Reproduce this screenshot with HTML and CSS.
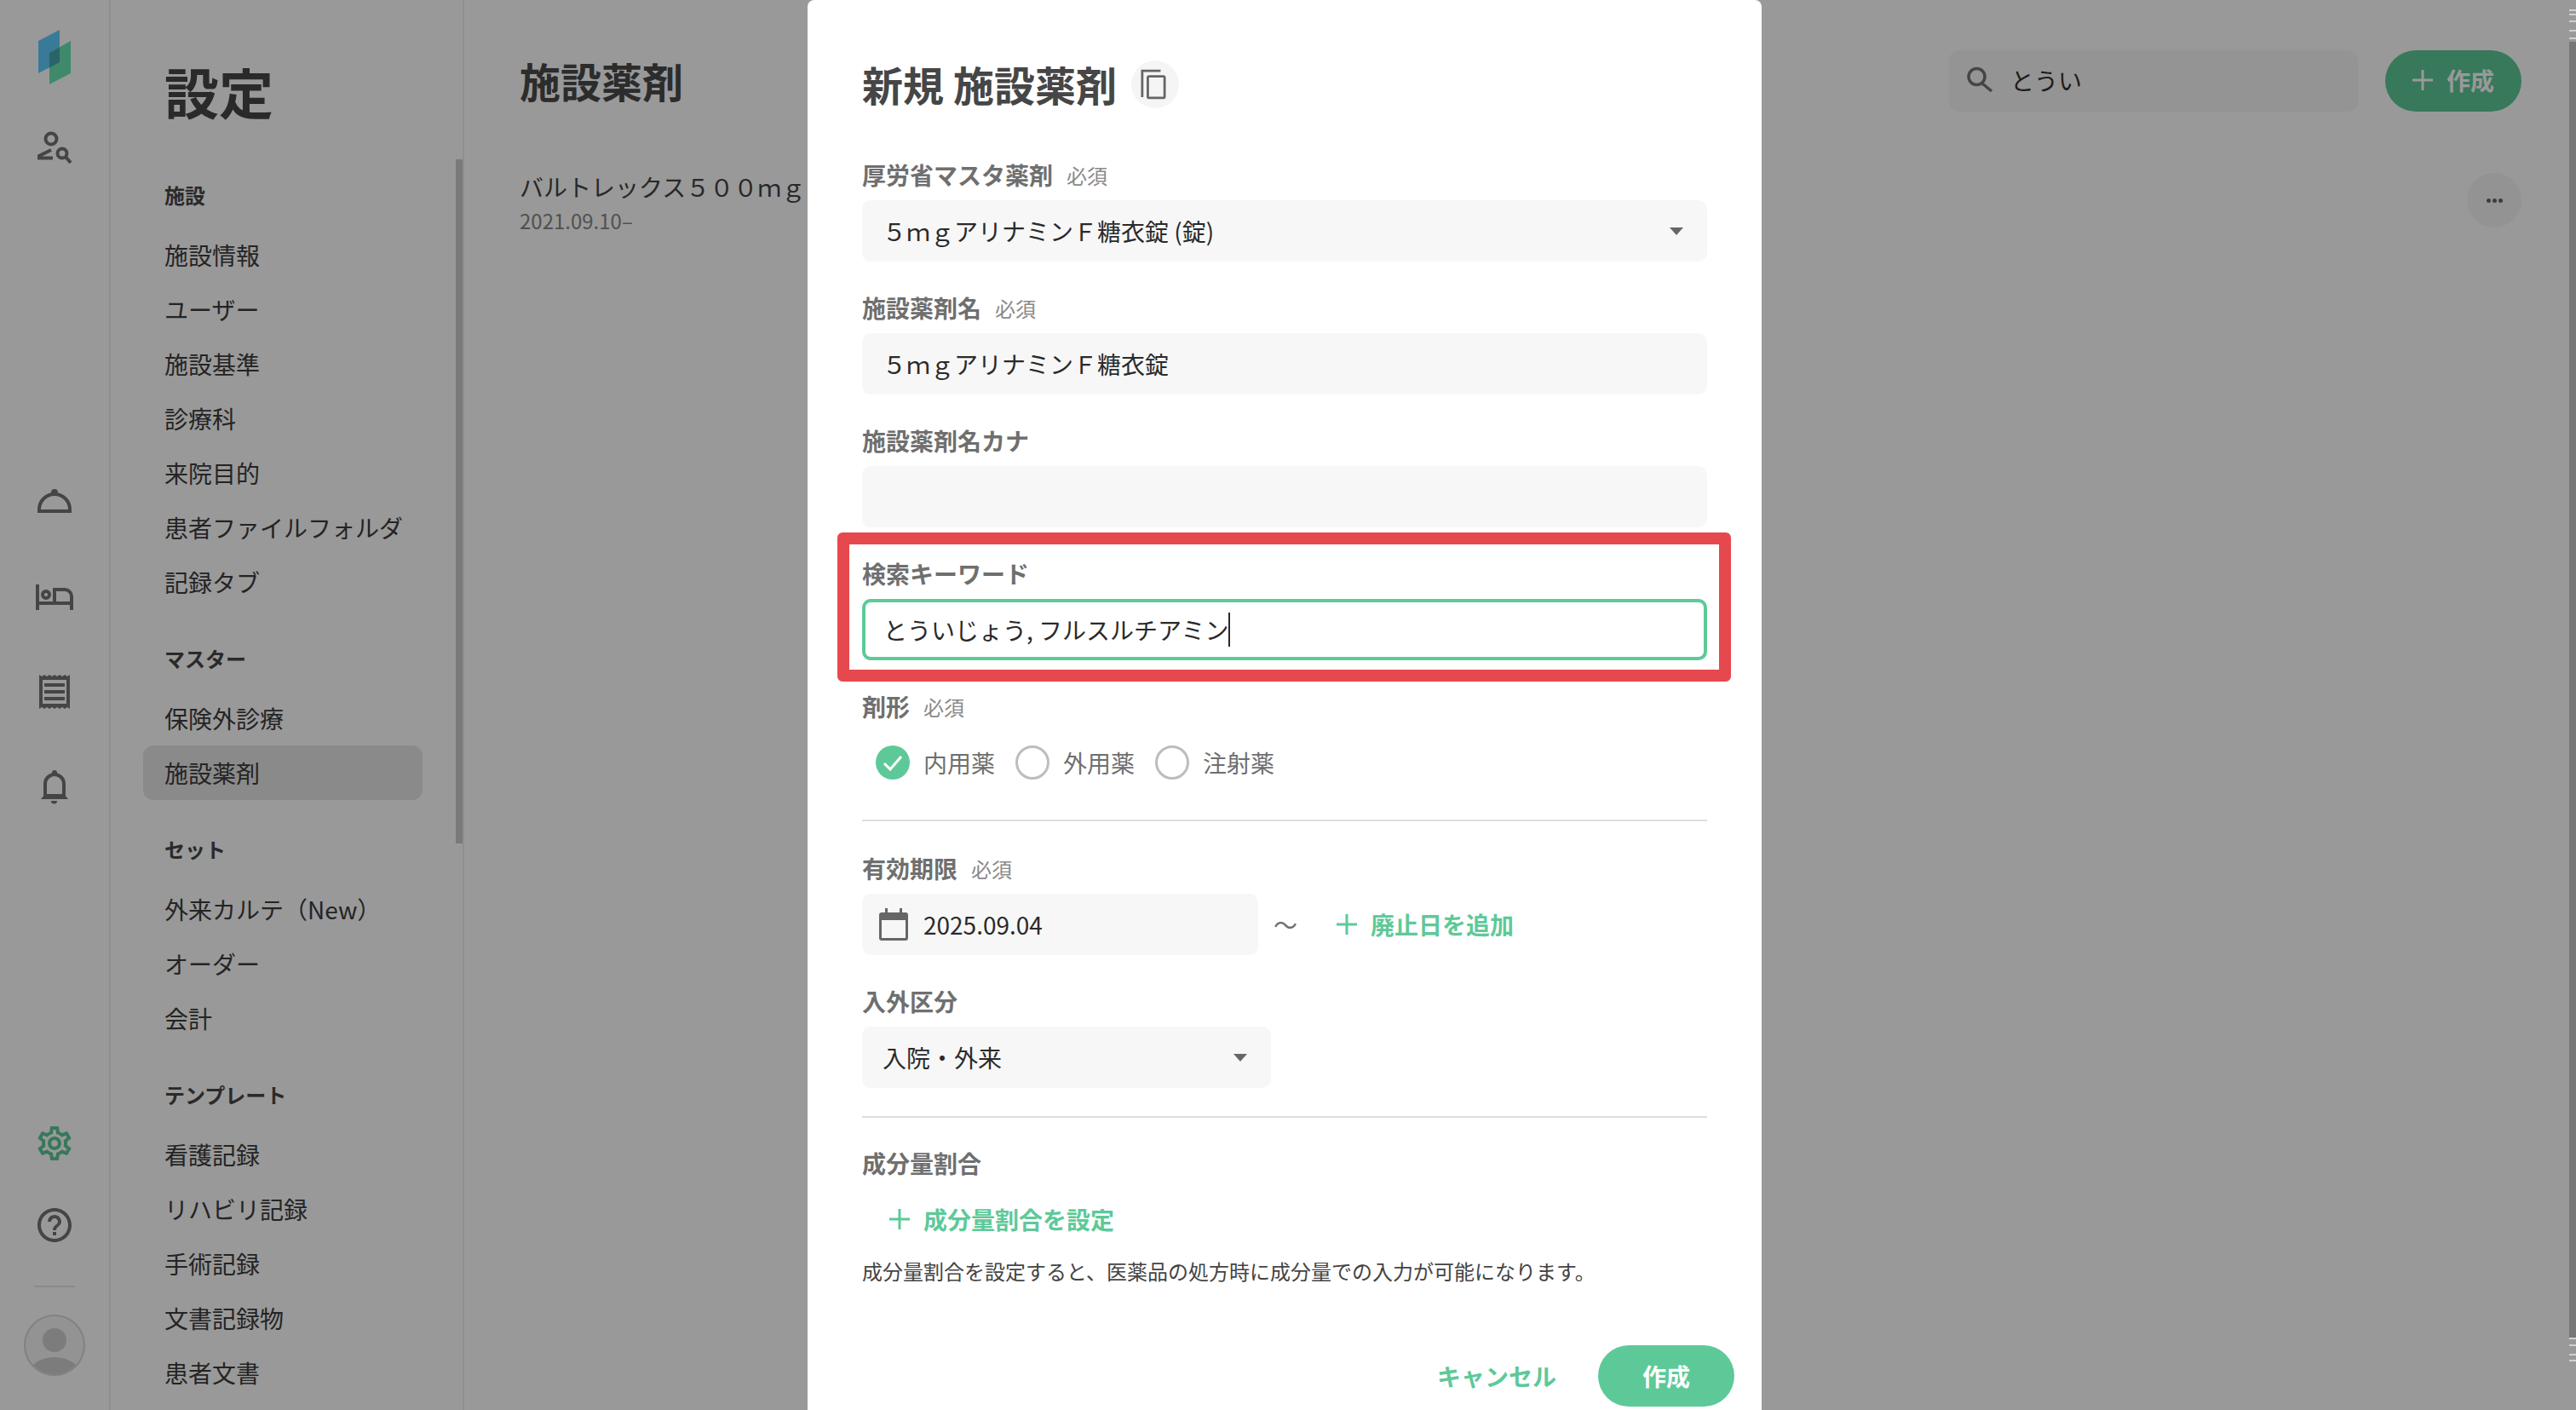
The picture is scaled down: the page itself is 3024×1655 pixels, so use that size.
FILE: index.html
```html
<!DOCTYPE html>
<html lang="ja">
<head>
	<meta charset="UTF-8">
	<meta name="viewport" content="width=device-width, initial-scale=1.0">
	<title>施設薬剤</title>
	<link rel="stylesheet" href="styles.css">
</head>
<body>

	<div class="app">
		<!-- Icon rail -->
		<nav class="rail">
			<svg class="logo" width="40" height="66" viewBox="44 34 40 66">
				<polygon points="45,48 70,35 70,73 45,86" fill="#60ccff"/>
				<polygon points="58,62 83,48 83,86 58,99" fill="#69e6b1"/>
				<polygon points="58,62 70,55.5 70,73 58,79.5" fill="#46a7af"/>
			</svg>
			<svg class="rail-search" width="42" height="38" viewBox="43 154 42 38" fill="none" stroke="#737373" stroke-width="4">
				<circle cx="60" cy="163" r="6.5"/>
				<path d="M60 176 L46 183 V185.5 H62"/>
				<circle cx="73" cy="180" r="5.5"/>
				<path d="M77 184 L83 191"/>
			</svg>
			<div class="rail-mid">
				<svg width="48" height="48" viewBox="0 0 48 48" fill="#737373">
					<circle cx="24" cy="14" r="4"/>
					<path d="M6 34 a18 18 0 0 1 36 0" fill="none" stroke="#737373" stroke-width="4"/>
					<rect x="4" y="34" width="40" height="4"/>
				</svg>
				<svg width="48" height="48" viewBox="0 0 48 48" fill="none" stroke="#737373" stroke-width="4">
					<path d="M4 10 V40 M4 32 H44 M44 40 V24 a8 8 0 0 0 -8 -8 H24 V32"/>
					<circle cx="14" cy="22" r="4"/>
				</svg>
				<svg width="48" height="48" viewBox="0 0 48 48" fill="#737373">
					<path d="M6 4 l3 2 3-2 3 2 3-2 3 2 3-2 3 2 3-2 3 2 3-2 3 2 3-2 V44 l-3-2-3 2-3-2-3 2-3-2-3 2-3-2-3 2-3-2-3 2-3-2-3 2 Z M10 10 V38 H38 V10 Z" fill-rule="evenodd"/>
					<rect x="12" y="14" width="24" height="4"/>
					<rect x="12" y="22" width="24" height="4"/>
					<rect x="12" y="30" width="24" height="4"/>
				</svg>
				<svg width="48" height="48" viewBox="0 0 48 48" fill="#737373">
					<circle cx="24" cy="7" r="3"/>
					<path d="M13 34 V20 a11 11 0 0 1 22 0 V34" fill="none" stroke="#737373" stroke-width="4"/>
					<path d="M8 38 L13 32 H35 L40 38 Z"/>
					<path d="M20 40 h7 a3.5 3.5 0 0 1 -7 0 Z"/>
				</svg>
			</div>
			<div class="rail-bottom">
				<svg width="48" height="48" viewBox="0 0 24 24" fill="#5ec998">
					<path d="M19.43 12.98c.04-.32.07-.64.07-.98 0-.34-.03-.66-.07-.98l2.11-1.65c.19-.15.24-.42.12-.64l-2-3.46c-.09-.16-.26-.25-.44-.25-.06 0-.12.01-.17.03l-2.49 1c-.52-.4-1.08-.73-1.69-.98l-.38-2.65C14.46 2.18 14.25 2 14 2h-4c-.25 0-.46.18-.49.42l-.38 2.65c-.61.25-1.17.59-1.69.98l-2.49-1c-.06-.02-.12-.03-.18-.03-.17 0-.34.09-.43.25l-2 3.46c-.13.22-.07.49.12.64l2.11 1.65c-.04.32-.07.65-.07.98 0 .33.03.66.07.98l-2.11 1.65c-.19.15-.24.42-.12.64l2 3.46c.09.16.26.25.44.25.06 0 .12-.01.17-.03l2.49-1c.52.4 1.08.73 1.69.98l.38 2.65c.03.24.24.42.49.42h4c.25 0 .46-.18.49-.42l.38-2.65c.61-.25 1.17-.59 1.69-.98l2.49 1c.06.02.12.03.18.03.17 0 .34-.09.43-.25l2-3.46c.12-.22.07-.49-.12-.64l-2.11-1.65zm-1.98-1.71c.04.31.05.52.05.73 0 .21-.02.43-.05.73l-.14 1.13.89.7 1.08.84-.7 1.21-1.27-.51-1.04-.42-.9.68c-.43.32-.84.56-1.25.73l-1.06.43-.16 1.13-.2 1.35h-1.4l-.19-1.35-.16-1.13-1.06-.43c-.43-.18-.83-.41-1.23-.71l-.91-.7-1.06.43-1.27.51-.7-1.21 1.08-.84.89-.7-.14-1.13c-.03-.31-.05-.54-.05-.74s.02-.43.05-.73l.14-1.13-.89-.7-1.08-.84.7-1.21 1.27.51 1.04.42.9-.68c.43-.32.84-.56 1.25-.73l1.06-.43.16-1.13.2-1.35h1.39l.19 1.35.16 1.13 1.06.43c.43.18.83.41 1.23.71l.91.7 1.06-.43 1.27-.51.7 1.21-1.07.85-.89.7.14 1.13zM12 8c-2.21 0-4 1.79-4 4s1.79 4 4 4 4-1.79 4-4-1.79-4-4-4zm0 6c-1.1 0-2-.9-2-2s.9-2 2-2 2 .9 2 2-.9 2-2 2z"/>
				</svg>
				<svg width="48" height="48" viewBox="0 0 24 24" fill="#737373">
					<path d="M11 18h2v-2h-2v2zm1-16C6.48 2 2 6.48 2 12s4.48 10 10 10 10-4.48 10-10S17.52 2 12 2zm0 18c-4.41 0-8-3.59-8-8s3.59-8 8-8 8 3.59 8 8-3.59 8-8 8zm0-14c-2.21 0-4 1.79-4 4h2c0-1.1.9-2 2-2s2 .9 2 2c0 2-3 1.75-3 5h2c0-2.25 3-2.5 3-5 0-2.21-1.79-4-4-4z"/>
				</svg>
				<div class="rail-line"></div>
				<div class="avatar">
					<svg width="68" height="68" viewBox="0 0 68 68" fill="#cfcfcf">
						<circle cx="34" cy="28" r="14"/>
						<ellipse cx="34" cy="72" rx="32" ry="24"/>
					</svg>
				</div>
			</div>
		</nav>

		<!-- Settings sidebar -->
		<aside class="sidebar">
			<h1 class="sidebar-title">設定</h1>
			<div class="thumb"></div>

			<h3 class="group">施設</h3>
			<a class="item">施設情報</a>
			<a class="item">ユーザー</a>
			<a class="item">施設基準</a>
			<a class="item">診療科</a>
			<a class="item">来院目的</a>
			<a class="item">患者ファイルフォルダ</a>
			<a class="item">記録タブ</a>

			<h3 class="group">マスター</h3>
			<a class="item">保険外診療</a>
			<a class="item selected">施設薬剤</a>

			<h3 class="group">セット</h3>
			<a class="item">外来カルテ（New）</a>
			<a class="item">オーダー</a>
			<a class="item">会計</a>

			<h3 class="group">テンプレート</h3>
			<a class="item">看護記録</a>
			<a class="item">リハビリ記録</a>
			<a class="item">手術記録</a>
			<a class="item">文書記録物</a>
			<a class="item">患者文書</a>
		</aside>

		<!-- Main list behind the dialog -->
		<main class="main">
			<div class="main-head">
				<h2 class="main-title">施設薬剤</h2>
				<div class="search">
					<svg width="36" height="36" viewBox="0 0 36 36" fill="none" stroke="#737373" stroke-width="3.5">
						<circle cx="14.5" cy="14" r="9.5"/>
						<path d="M21 22 L32 31"/>
					</svg>
					<span>とうい</span>
				</div>
				<button class="create-btn">
					<svg class="plus" width="24" height="24" viewBox="0 0 24 24"><path d="M12 0V24M0 12H24" stroke="#fff" stroke-width="3"/></svg>
					作成
				</button>
			</div>
			<div class="row">
				<div>
					<div class="row-name">バルトレックス５００ｍｇ</div>
					<div class="row-date">2021.09.10–</div>
				</div>
				<div class="more"><i></i><i></i><i></i></div>
			</div>
		</main>
	</div>

	<div class="page-scroll"></div>
	<div class="backdrop"></div>
	<div class="scroll-ticks top"><i></i><i></i><i></i><i></i><i></i></div>
	<div class="scroll-ticks bottom"><i></i><i></i><i></i><i></i></div>

	<!-- Dialog -->
	<div class="modal">
		<div class="modal-head">
			<h2>新規 施設薬剤</h2>
			<span class="copy-btn">
				<svg width="32" height="38" viewBox="0 0 32 38" fill="none" stroke="#666" stroke-width="3">
					<path d="M2 35V2H25"/>
					<rect x="9" y="9" width="21" height="27" rx="1.5"/>
				</svg>
			</span>
		</div>

		<div class="field">
			<label>厚労省マスタ薬剤<small>必須</small></label>
			<div class="box select">５ｍｇアリナミンＦ糖衣錠 (錠)</div>
		</div>
		<div class="field">
			<label>施設薬剤名<small>必須</small></label>
			<div class="box">５ｍｇアリナミンＦ糖衣錠</div>
		</div>
		<div class="field">
			<label>施設薬剤名カナ</label>
			<div class="box"></div>
		</div>
		<div class="field">
			<label>検索キーワード</label>
			<div class="box focused">とういじょう, フルスルチアミン<span class="caret"></span></div>
		</div>
		<div class="field-radio">
			<label>剤形<small>必須</small></label>
			<div class="radios">
				<span class="radio-item">
					<svg width="40" height="40" viewBox="0 0 40 40"><circle cx="20" cy="20" r="20" fill="#5ec998"/><path d="M10 21 L17 28 L30 13" fill="none" stroke="#fff" stroke-width="3"/></svg>
					内用薬
				</span>
				<span class="radio-item"><i class="radio-off"></i>外用薬</span>
				<span class="radio-item"><i class="radio-off"></i>注射薬</span>
			</div>
		</div>
		<hr class="divider">

		<div class="field">
			<label>有効期限<small>必須</small></label>
			<div class="date-row">
				<div class="box date">
					<svg width="34" height="38" viewBox="0 0 34 38" fill="#666">
						<path d="M7 0h3v5h14V0h3v5h4a3 3 0 0 1 3 3v27a3 3 0 0 1-3 3H3a3 3 0 0 1-3-3V8a3 3 0 0 1 3-3h4z M3 14V35H31V14z" fill-rule="evenodd"/>
					</svg>
					<span>2025.09.04</span>
				</div>
				<span class="tilde">〜</span>
				<a class="add-link">
					<svg class="plus" width="24" height="24" viewBox="0 0 24 24"><path d="M12 0V24M0 12H24" stroke="#5ec998" stroke-width="3"/></svg>
					廃止日を追加
				</a>
			</div>
		</div>
		<div class="field-last">
			<label>入外区分</label>
			<div class="box select short">入院・外来</div>
		</div>
		<hr class="divider second">

		<label class="ratio-label">成分量割合</label>
		<a class="add-link ratio-link">
			<svg class="plus" width="24" height="24" viewBox="0 0 24 24"><path d="M12 0V24M0 12H24" stroke="#5ec998" stroke-width="3"/></svg>
			成分量割合を設定
		</a>
		<p class="help">成分量割合を設定すると、医薬品の処方時に成分量での入力が可能になります。</p>

		<div class="actions">
			<a class="cancel">キャンセル</a>
			<button class="submit">作成</button>
		</div>
	</div>

	<!-- Annotation frame around the keyword field -->
	<div class="highlight"></div>

</body>
</html>
```

FILE: styles.css
```css
* {
	box-sizing: border-box;
}
html, body {
	margin: 0;
	height: 100%;
	overflow: hidden;
}
body {
	font-family: "Noto Sans CJK JP", "Noto Sans", sans-serif;
	font-size: 28px;
	color: #333;
	background: #fff;
}
h1, h2, h3, p {
	margin: 0;
}
svg {
	display: block;
	flex-shrink: 0;
}
.app {
	display: flex;
	height: 1655px;
}

/* rail */
.rail {
	width: 130px;
	flex-shrink: 0;
	border-right: 2px solid #eee;
	display: flex;
	flex-direction: column;
	align-items: center;
	background: #fff;
	position: relative;
}
.logo {
	margin-top: 34px;
}
.rail-search {
	margin-top: 54px;
}
.rail-mid {
	margin-top: 372px;
	display: flex;
	flex-direction: column;
	gap: 64px;
}
.rail-bottom {
	margin-top: auto;
	padding-bottom: 40px;
	display: flex;
	flex-direction: column;
	align-items: center;
}
.rail-bottom svg + svg {
	margin-top: 48px;
}
.rail-line {
	width: 48px;
	height: 2px;
	background: #e6e6e6;
	margin: 47px 0 32px;
}
.avatar {
	width: 72px;
	height: 72px;
	border-radius: 50%;
	border: 2px solid #d8d8d8;
	overflow: hidden;
	background: #f5f5f5;
}

/* sidebar */
.sidebar {
	width: 415px;
	flex-shrink: 0;
	border-right: 2px solid #eee;
	padding: 0 47px 0 38px;
	position: relative;
	overflow: hidden;
}
.sidebar-title {
	font-size: 64px;
	line-height: 80px;
	font-weight: 700;
	color: #464646;
	margin: 66px 0 63px 25px;
}
.thumb {
	position: absolute;
	right: 0;
	top: 187px;
	width: 8px;
	height: 803px;
	background: #ccc;
}
.group {
	font-size: 24px;
	line-height: 40px;
	font-weight: 700;
	color: #464646;
	margin: 38px 0 18px 25px;
}
.sidebar-title + .thumb + .group {
	margin-top: 0;
}
.item {
	display: block;
	height: 64px;
	line-height: 64px;
	padding-left: 25px;
	border-radius: 12px;
	color: #3c3c3c;
	white-space: nowrap;
}
.item.selected {
	background: #e6e6e6;
}

/* main */
.main {
	flex: 1;
	padding: 59px 64px 0 65px;
}
.main-head {
	display: flex;
	align-items: center;
}
.main-title {
	font-size: 48px;
	font-weight: 700;
	line-height: 72px;
	color: #4a4a4a;
	margin-top: -2px;
	flex: 1;
}
.search {
	width: 480px;
	height: 72px;
	background: #f7f7f7;
	border-radius: 12px;
	display: flex;
	align-items: center;
	gap: 18px;
	padding: 0 0 2px 18px;
	margin-right: 32px;
	color: #333;
}
.create-btn {
	width: 160px;
	height: 72px;
	border: none;
	border-radius: 36px;
	background: #5ec998;
	color: #fff;
	font: 700 28px "Noto Sans CJK JP", sans-serif;
	display: flex;
	align-items: center;
	justify-content: center;
	gap: 16px;
	padding: 0 0 2px;
}
.row {
	display: flex;
	justify-content: space-between;
	margin-top: 72px;
}
.row-name {
	line-height: 40px;
	color: #444;
	white-space: nowrap;
	margin-top: -4px;
}
.row-date {
	font-size: 24px;
	line-height: 36px;
	margin-top: 2px;
	color: #888;
}
.more {
	width: 64px;
	height: 64px;
	border-radius: 50%;
	background: #f5f5f5;
	display: flex;
	align-items: center;
	justify-content: center;
	gap: 2px;
}
.more i {
	width: 5px;
	height: 5px;
	border-radius: 50%;
	background: #666;
}
.page-scroll {
	position: fixed;
	right: 0;
	top: 49px;
	width: 8px;
	height: 1521px;
	background: #c6c6c6;
}

/* overlay */
.backdrop {
	position: fixed;
	inset: 0;
	background: rgba(0, 0, 0, 0.4);
}
.scroll-ticks {
	position: fixed;
	right: 0;
	width: 8px;
}
.scroll-ticks i {
	position: absolute;
	left: 0;
	width: 8px;
	height: 2px;
	background: #d0d0d0;
}
.scroll-ticks.top {
	top: 0;
}
.scroll-ticks.top i:nth-child(1) {
	top: 11px;
}
.scroll-ticks.top i:nth-child(2) {
	top: 16px;
}
.scroll-ticks.top i:nth-child(3) {
	top: 24px;
}
.scroll-ticks.top i:nth-child(4) {
	top: 35px;
}
.scroll-ticks.top i:nth-child(5) {
	top: 44px;
}
.scroll-ticks.bottom {
	top: 1570px;
}
.scroll-ticks.bottom i:nth-child(1) {
	top: 0;
}
.scroll-ticks.bottom i:nth-child(2) {
	top: 8px;
}
.scroll-ticks.bottom i:nth-child(3) {
	top: 19px;
}
.scroll-ticks.bottom i:nth-child(4) {
	top: 26px;
}

/* dialog */
.modal {
	position: fixed;
	left: 948px;
	top: 0;
	width: 1120px;
	height: 1700px;
	background: #fff;
	border-radius: 8px;
	padding: 0 64px;
	color: #2a2a2a;
}
.modal-head {
	display: flex;
	align-items: center;
	gap: 17px;
	height: 72px;
	margin: 66px 0 48px;
}
.modal-head h2 {
	font-size: 48px;
	font-weight: 700;
	line-height: 72px;
	color: #464646;
	margin-top: -8px;
}
.copy-btn {
	width: 56px;
	height: 56px;
	border-radius: 50%;
	background: #f5f5f5;
	display: flex;
	align-items: center;
	justify-content: center;
	margin-top: -6px;
}
.copy-btn svg {
	width: 30px;
	height: 36px;
	margin-left: -3px;
}
label {
	display: flex;
	align-items: center;
	height: 40px;
	padding-bottom: 2px;
	font-weight: 700;
	color: #6f6f6f;
	margin-bottom: 9px;
}
label small {
	font-size: 24px;
	font-weight: 400;
	color: #8a8a8a;
	margin-left: 16px;
}
.field {
	margin-bottom: 35px;
}
.box {
	height: 72px;
	background: #f7f7f7;
	border-radius: 10px;
	padding: 0 24px;
	display: flex;
	align-items: center;
	color: #2a2a2a;
	white-space: nowrap;
}
.select {
	position: relative;
}
.select::after {
	content: "";
	position: absolute;
	right: 28px;
	top: 32px;
	border-left: 8px solid transparent;
	border-right: 8px solid transparent;
	border-top: 9px solid #666;
}
.short {
	width: 480px;
}
.focused {
	background: #fff;
	border: 4px solid #5ec998;
	padding: 0 21px;
}
.caret {
	width: 2px;
	height: 40px;
	background: #2a2a2a;
	margin-left: -1px;
}
.field-radio label {
	margin-bottom: 25px;
}
.radios {
	display: flex;
	padding-left: 16px;
	gap: 24px;
}
.radio-item {
	display: flex;
	align-items: center;
	gap: 16px;
	height: 40px;
	color: #6f6f6f;
}
.radio-off {
	width: 40px;
	height: 40px;
	border-radius: 50%;
	border: 3px solid #bdbdbd;
}
.divider {
	border: none;
	height: 2px;
	background: #dedede;
	margin: 47px 0 36px;
}
.divider.second {
	margin: 33px 0 34px;
}
.date-row {
	display: flex;
	align-items: center;
}
.date {
	width: 465px;
	padding-left: 20px;
	gap: 18px;
}
.tilde {
	margin: 0 46px 0 18px;
	color: #6f6f6f;
}
.add-link {
	display: flex;
	align-items: center;
	gap: 16px;
	font-weight: 700;
	color: #5ec998;
}
.ratio-link {
	margin: 25px 0 0 32px;
	height: 40px;
}
.ratio-label {
	margin-bottom: 0;
}
.help {
	font-size: 24px;
	line-height: 40px;
	color: #444;
	margin-top: 21px;
}
.actions {
	display: flex;
	justify-content: flex-end;
	align-items: center;
	gap: 49px;
	margin: 67px -32px 0 0;
}
.cancel {
	font-weight: 700;
	color: #5ec998;
}
.submit {
	width: 160px;
	height: 72px;
	border: none;
	border-radius: 36px;
	background: #5ec998;
	color: #fff;
	font: 700 28px "Noto Sans CJK JP", sans-serif;
}
.highlight {
	position: fixed;
	left: 983px;
	top: 625px;
	width: 1049px;
	height: 175px;
	border: 14px solid #e5494e;
	border-radius: 6px;
}
```
